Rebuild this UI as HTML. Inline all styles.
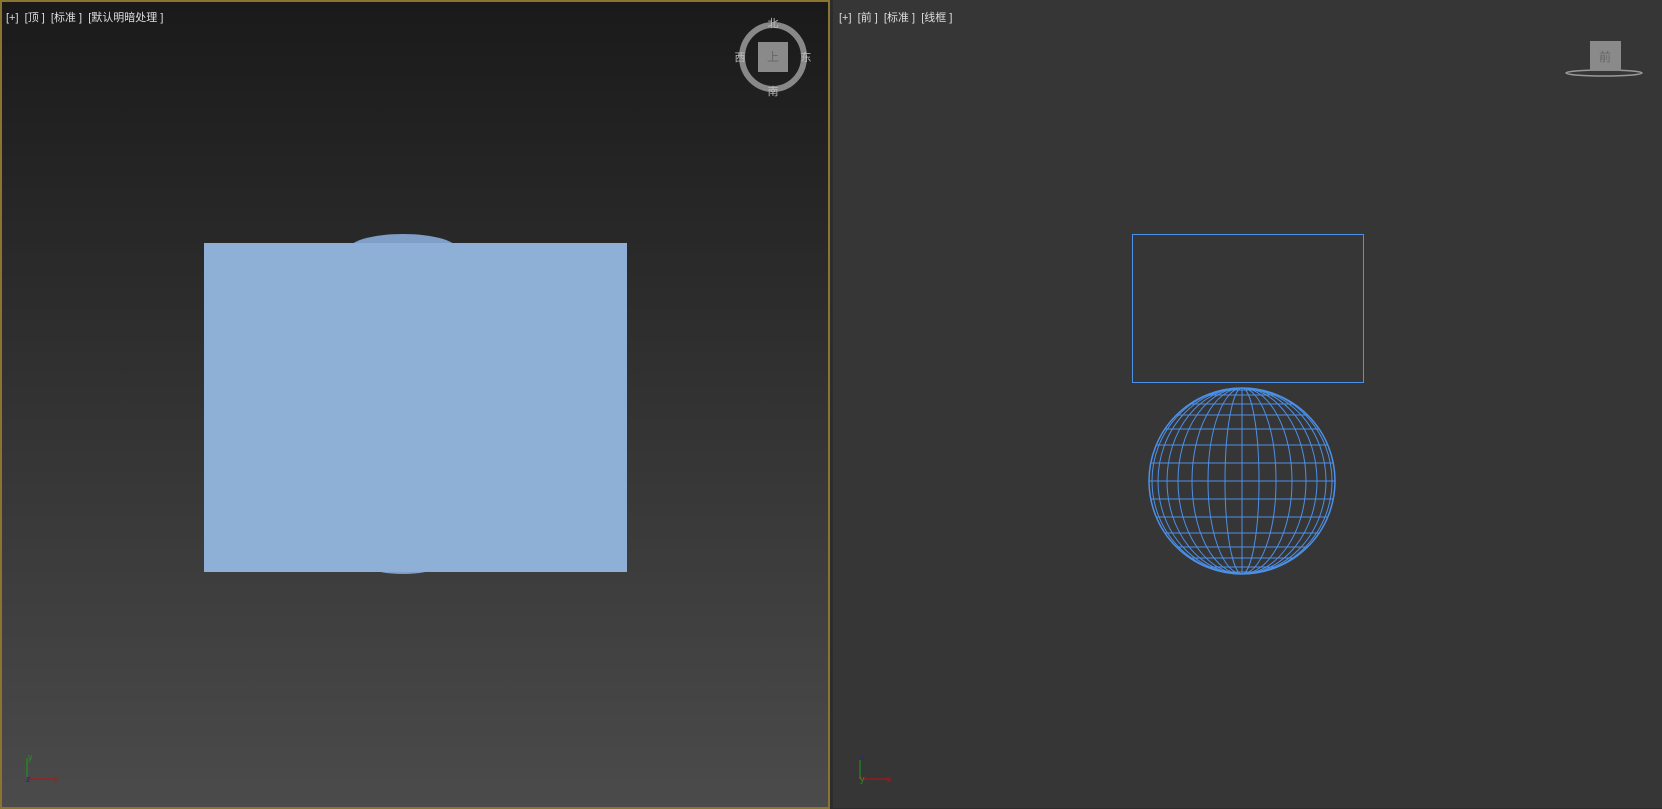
<!DOCTYPE html><html><head><meta charset="utf-8"><style>
body{margin:0;width:1662px;height:808px;background:#2c2c2c;overflow:hidden;font-family:"Liberation Sans","Noto Sans CJK SC",sans-serif}
#l{position:absolute;left:0;top:0;width:826px;height:805px;border:1px solid #8a7430;border-width:2px 2px 2px 2px;background:linear-gradient(#1a1a1a,#4b4b4b)}
#r{position:absolute;left:833px;top:0;width:829px;height:808px;background:#363636}
.t{position:absolute;color:#ddd;font-size:11px;top:9px;white-space:pre}
</style></head><body>
<div id="l"></div><div id="r"></div>
<div class="t" style="left:6px">[+]  [顶 ]  [标准 ]  [默认明暗处理 ]</div>
<div class="t" style="left:839px">[+]  [前 ]  [标准 ]  [线框 ]</div>
<svg width="1662" height="808" style="position:absolute;left:0;top:0">
<ellipse cx="403" cy="250" rx="55" ry="16" fill="#7f9fc8"/>
<ellipse cx="403" cy="568" rx="30" ry="6" fill="#7f9fc8"/>
<rect x="204" y="243" width="423" height="329" fill="#8fb0d6"/>
<ellipse cx="773" cy="57" rx="31" ry="32" fill="none" stroke="#888" stroke-width="6"/>
<rect x="758" y="42" width="30" height="30" fill="#8a8a8a"/>
<text x="773" y="27" fill="#bbb" font-size="11" text-anchor="middle">北</text>
<text x="773" y="95" fill="#bbb" font-size="11" text-anchor="middle">南</text>
<text x="740" y="61" fill="#bbb" font-size="11" text-anchor="middle">西</text>
<text x="806" y="61" fill="#bbb" font-size="11" text-anchor="middle">东</text>
<text x="773" y="61" fill="#666" font-size="12" text-anchor="middle">上</text>
<ellipse cx="1604" cy="73" rx="38" ry="3" fill="none" stroke="#999" stroke-width="1.5"/>
<rect x="1590" y="41" width="31" height="30" fill="#8a8a8a"/>
<text x="1605" y="61" fill="#666" font-size="12" text-anchor="middle">前</text>
<rect x="1132.5" y="234.5" width="231" height="148" fill="none" stroke="#4d90e8"/>
<g fill="none" stroke="#4d90e8" stroke-width="1">
<circle cx="1242" cy="481" r="93" stroke-width="1.5"/>
<line x1="1242" y1="388" x2="1242" y2="574"/>
<ellipse cx="1242" cy="481" rx="17" ry="93"/><ellipse cx="1242" cy="481" rx="34" ry="93"/><ellipse cx="1242" cy="481" rx="50" ry="93"/><ellipse cx="1242" cy="481" rx="64" ry="93"/><ellipse cx="1242" cy="481" rx="75" ry="93"/><ellipse cx="1242" cy="481" rx="84" ry="93"/><ellipse cx="1242" cy="481" rx="90" ry="93"/>
<line x1="1224" y1="390" x2="1260" y2="390"/><line x1="1206" y1="395" x2="1278" y2="395"/><line x1="1190" y1="404" x2="1294" y2="404"/><line x1="1176" y1="415" x2="1308" y2="415"/><line x1="1165" y1="429" x2="1319" y2="429"/><line x1="1156" y1="445" x2="1328" y2="445"/><line x1="1151" y1="463" x2="1333" y2="463"/><line x1="1149" y1="481" x2="1335" y2="481"/><line x1="1151" y1="499" x2="1333" y2="499"/><line x1="1156" y1="517" x2="1328" y2="517"/><line x1="1165" y1="533" x2="1319" y2="533"/><line x1="1176" y1="547" x2="1308" y2="547"/><line x1="1190" y1="558" x2="1294" y2="558"/><line x1="1206" y1="567" x2="1278" y2="567"/><line x1="1224" y1="572" x2="1260" y2="572"/>
</g>
<line x1="27" y1="758" x2="27" y2="778" stroke="#1a9a1a"/><line x1="27" y1="779" x2="55" y2="779" stroke="#c01010"/>
<text x="28" y="760" fill="#1a9a1a" font-size="9">y</text><text x="54" y="782" fill="#c01010" font-size="9">x</text><text x="26" y="782" fill="#2020c0" font-size="9">z</text>
<line x1="860" y1="760" x2="860" y2="779" stroke="#1a9a1a"/><line x1="860" y1="779" x2="888" y2="779" stroke="#c01010"/>
<text x="860" y="760" fill="#2020c0" font-size="9">z</text><text x="887" y="782" fill="#c01010" font-size="9">x</text><text x="860" y="782" fill="#1a9a1a" font-size="9">y</text>
</svg>
</body></html>
